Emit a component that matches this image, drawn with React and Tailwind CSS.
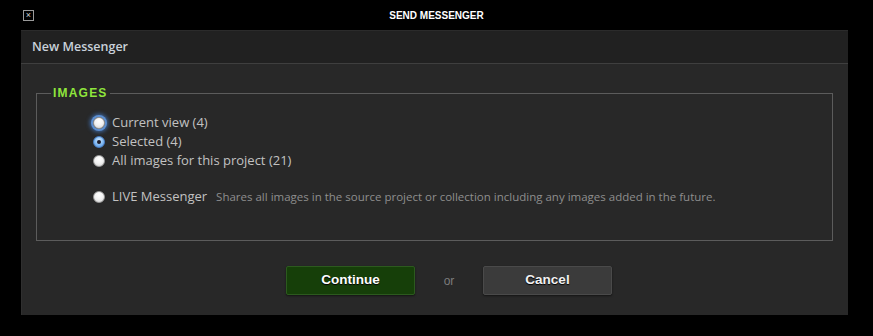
import React from "react";

const FONT = { fontFamily: '"Liberation Sans", Arial, sans-serif' };
const LABEL = { fontFamily: '"Open Sans", "Liberation Sans", sans-serif' };

function Radio({ checked = false, focused = false }) {
  if (checked) {
    return (
      <span className="w-[12px] h-[12px] rounded-full border border-[#4a7fc4] bg-[radial-gradient(circle_at_50%_35%,#d6ecff_0%,#8cc0f4_45%,#4a8fe0_100%)] flex items-center justify-center shrink-0">
        <span className="w-[4px] h-[4px] rounded-full bg-[#1b1b2a]" />
      </span>
    );
  }
  return (
    <span
      className={`w-[12px] h-[12px] rounded-full border border-[#9a9a9a] bg-[radial-gradient(circle_at_50%_30%,#ffffff_0%,#f2f2f2_50%,#cfcfcf_100%)] shrink-0 ${
        focused ? "shadow-[0_0_0_2px_#5d8fd0,0_0_4px_3px_#3f6fb0]" : ""
      }`}
    />
  );
}

function Option({ label, checked, focused, note }) {
  return (
    <div className="flex items-center h-[19px]" style={LABEL}>
      <Radio checked={checked} focused={focused} />
      <span className="ml-[7px] text-[13px] text-[#c2c2c2]">{label}</span>
      {note && <span className="ml-[9px] text-[11.5px] text-[#8e8e8e]">{note}</span>}
    </div>
  );
}

export default function App() {
  return (
    <div className="w-[873px] h-[336px] bg-black overflow-hidden" style={FONT}>
      {/* Title bar */}
      <div className="h-[30px] grid grid-cols-[1fr_auto_1fr] items-center">
        <div className="pl-[23px] flex">
          <span className="w-[11px] h-[11px] border border-[#9a9a9a] flex items-center justify-center text-[#cfcfcf] text-[9px] leading-none">
            ×
          </span>
        </div>
        <div className="text-white text-[10px] font-bold">SEND MESSENGER</div>
        <div />
      </div>

      {/* Panel */}
      <div className="ml-[21px] w-[827px] h-[285px] bg-[#282828] flex flex-col shadow-[inset_1px_0_0_#2f2f2f]">
        <div className="h-[34px] bg-[#212121] border-t border-[#2b2b2b] border-b border-b-[#3f3f3f] flex items-center pl-[11px]">
          <span className="text-[12.5px] font-semibold text-[#c9d1da]" style={LABEL}>
            New Messenger
          </span>
        </div>

        <div className="pt-[22px] px-[15px]">
          <fieldset className="border border-[#5c5c5c] h-[155px]">
            <legend className="ml-[14px] px-[2px] text-[12px] leading-[14px] font-bold tracking-[1.2px] text-[#8fe63c]">
              IMAGES
            </legend>
            <div className="pl-[56px] pt-[13px]">
              <Option label="Current view (4)" focused />
              <Option label="Selected (4)" checked />
              <Option label="All images for this project (21)" />
              <div className="h-[17px]" />
              <Option
                label="LIVE Messenger"
                note="Shares all images in the source project or collection including any images added in the future."
              />
            </div>
          </fieldset>
        </div>

        <div className="mt-[25px] ml-[265px] flex items-center">
          <button className="w-[129px] h-[29px] bg-[#163f09] border border-[#2c5a1e] rounded-[2px] text-white text-[13.5px] font-bold [text-shadow:0_1px_1px_#000] shadow-[0_1px_2px_rgba(0,0,0,0.5)]">
            Continue
          </button>
          <span className="w-[68px] text-center text-[12px] text-[#7c7c7c]">or</span>
          <button className="w-[129px] h-[29px] bg-[#3b3b3b] border border-[#4a4a4a] rounded-[2px] text-[#f2f2f2] text-[13.5px] font-bold [text-shadow:0_1px_1px_#000] shadow-[0_1px_2px_rgba(0,0,0,0.5)]">
            Cancel
          </button>
        </div>
      </div>
    </div>
  );
}
